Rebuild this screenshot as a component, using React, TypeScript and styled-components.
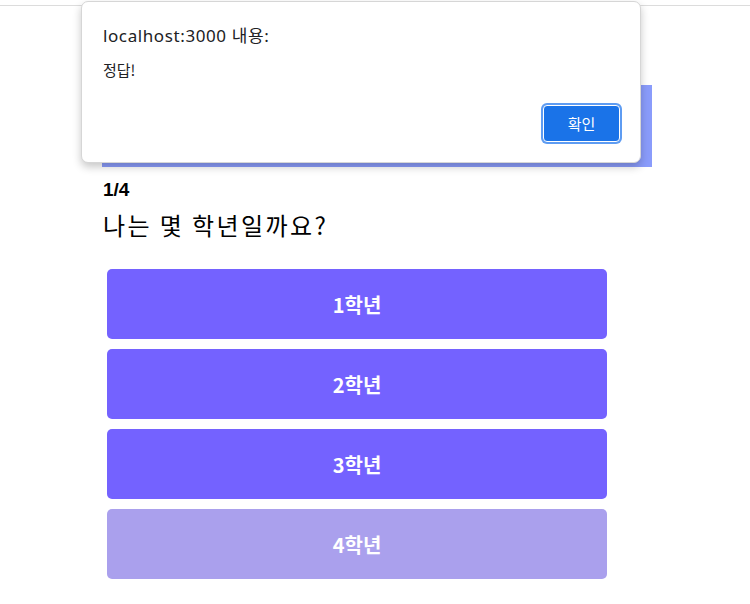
import React from "react";
import styled, { createGlobalStyle } from "styled-components";

const GlobalStyle = createGlobalStyle`
  html, body {
    margin: 0;
    padding: 0;
    background: #ffffff;
    font-family: "Noto Sans", "Noto Sans CJK KR", sans-serif;
  }
`;

const grades = ["1학년", "2학년", "3학년", "4학년"];

export default function App() {
  return (
    <Page>
      <GlobalStyle />
      <ChromeEdge />
      <Main>
        <Banner />
        <Counter>1/4</Counter>
        <Question>나는 몇 학년일까요?</Question>
        <Answers>
          {grades.map((g, i) => (
            <Answer key={g} $faded={i === 3}>
              {g}
            </Answer>
          ))}
        </Answers>
      </Main>
      <Alert>
        <AlertTitle>localhost:3000 내용:</AlertTitle>
        <AlertMessage>정답!</AlertMessage>
        <AlertFooter>
          <OkButton>확인</OkButton>
        </AlertFooter>
      </Alert>
    </Page>
  );
}

const Page = styled.div`
  position: relative;
  width: 750px;
  height: 604px;
  overflow: hidden;
`;

const ChromeEdge = styled.div`
  height: 5px;
  border-bottom: 1px solid #dcdcdc;
`;

const Main = styled.main`
  display: flex;
  flex-direction: column;
  padding: 79px 0 0 102px;
`;

const Banner = styled.div`
  width: 550px;
  height: 82px;
  background: #8a9cfb;
`;

const Counter = styled.div`
  margin-top: 11px;
  padding-left: 1px;
  font-family: "Liberation Sans", "Noto Sans CJK KR", sans-serif;
  font-size: 19px;
  font-weight: 700;
  line-height: 24px;
  color: #000;
`;

const Question = styled.h1`
  margin: 8px 0 0 1px;
  font-family: "Noto Sans CJK KR", sans-serif;
  font-size: 24px;
  font-weight: 400;
  letter-spacing: 2.4px;
  line-height: 30px;
  color: #000;
`;

const Answers = styled.div`
  display: flex;
  flex-direction: column;
  gap: 10px;
  margin: 29px 0 0 5px;
  width: 500px;
`;

const Answer = styled.button<{ $faded?: boolean }>`
  height: 70px;
  border: none;
  border-radius: 5px;
  background: ${(p) => (p.$faded ? "#aaa0ed" : "#7462ff")};
  color: #ffffff;
  font-family: "Noto Sans CJK KR", sans-serif;
  font-size: 20px;
  font-weight: 700;
  cursor: pointer;
`;

const Alert = styled.div`
  position: absolute;
  left: 81px;
  top: 1px;
  width: 560px;
  height: 162px;
  box-sizing: border-box;
  padding: 21px 20px 0 21px;
  background: #ffffff;
  border: 1px solid #d6d6d6;
  border-radius: 7px;
  box-shadow: 0 4px 8px rgba(0, 0, 0, 0.22);
  display: flex;
  flex-direction: column;
`;

const AlertTitle = styled.div`
  font-family: "Noto Sans", "Noto Sans CJK KR", sans-serif;
  font-size: 17px;
  letter-spacing: 0.6px;
  line-height: 26px;
  color: #202124;
`;

const AlertMessage = styled.div`
  margin-top: 10px;
  font-family: "Noto Sans CJK KR", sans-serif;
  font-size: 15px;
  line-height: 22px;
  color: #202124;
`;

const AlertFooter = styled.div`
  display: flex;
  justify-content: flex-end;
  margin-top: 24px;
`;

const OkButton = styled.button`
  width: 77px;
  height: 37px;
  border: 1px solid #ffffff;
  border-radius: 4px;
  background: #1a73e8;
  box-shadow: 0 0 0 2px #5e9cf2;
  color: #ffffff;
  font-family: "Noto Sans CJK KR", sans-serif;
  font-size: 15px;
`;
